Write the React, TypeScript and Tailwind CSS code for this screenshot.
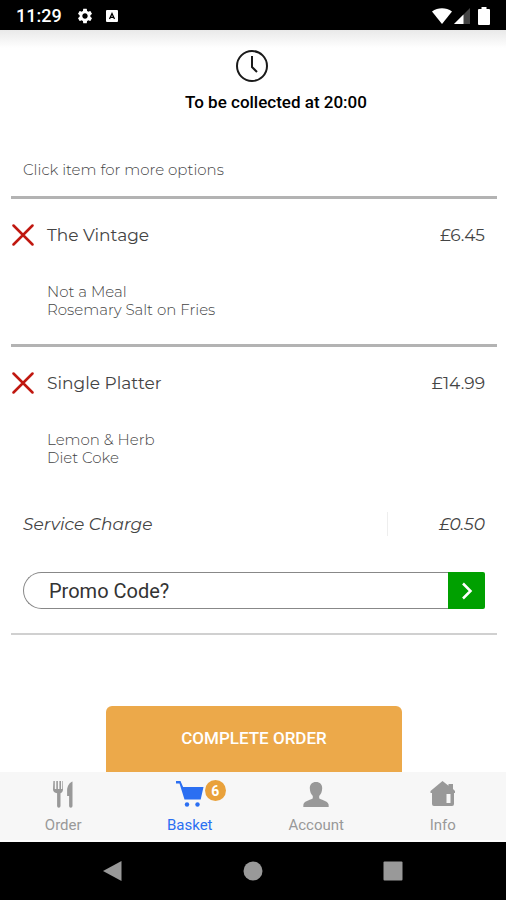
import { useState } from "react";
import { MdSettings } from "react-icons/md";

const items = [
  {
    name: "The Vintage",
    price: "£6.45",
    options: ["Not a Meal", "Rosemary Salt on Fries"],
  },
  {
    name: "Single Platter",
    price: "£14.99",
    options: ["Lemon & Herb", "Diet Coke"],
  },
];

function ClockIcon() {
  return (
    <svg
      viewBox="0 0 32 32"
      className="h-8 w-8"
      fill="none"
      stroke="#1a1a1a"
      strokeWidth="2"
    >
      <circle cx="16" cy="16" r="15" />
      <path d="M16 6v11l5 5" />
    </svg>
  );
}

function CutleryIcon() {
  return (
    <svg viewBox="0 0 28 28" className="h-7 w-7" fill="currentColor">
      <path d="M4.400 1h1.400v8h1.500V1h1.600v8h1.500V1h1.600v8h1.200V1h.6l.2 8.500c0 2-1.200 3.200-2.500 3.800V26a1.600 1.600 0 0 1-3.400 0V13.300C5.500 12.700 4 11.500 4 9.500z" />
      <path d="M23.500 1.500V26a1.700 1.700 0 0 1-3.400 0V16h-2v-6c.2-4 2.400-7.500 5.400-8.500z" />
    </svg>
  );
}

function CartIcon() {
  return (
    <svg viewBox="0 0 28 28" className="h-7 w-7" fill="currentColor">
      <path d="M0 1h4.500l2.600 6H27.500l-2.800 12.500H8.500L3.500 3.500H0z" />
      <circle cx="11" cy="24.500" r="2.200" />
      <circle cx="21.500" cy="24.500" r="2.200" />
    </svg>
  );
}

function PersonIcon() {
  return (
    <svg viewBox="0 0 28 28" className="h-7 w-7" fill="currentColor">
      <path d="M14 2c4 0 6.300 2.600 6.200 6.200-.1 3.600-1.400 6.200-3 7.700v2.300c.6 1.400 8.800 2.200 9.400 6.400l.1 2.400H1.300l.1-2.400c.6-4.200 8.800-5 9.400-6.400v-2.300c-1.600-1.500-2.900-4.100-3-7.700C7.700 4.600 10 2 14 2z" />
    </svg>
  );
}

function HouseIcon() {
  return (
    <svg viewBox="0 0 28 28" className="h-7 w-7" fill="currentColor">
      <path
        fillRule="evenodd"
        d="M13.500 1l6 4.800V4H24v5l2 2v2h-1v11a2 2 0 0 1-2 2H5a2 2 0 0 1-2-2V13H1.500v-2zM17.500 14v9h4v-9z"
      />
    </svg>
  );
}

const tabs = [
  { label: "Order", icon: CutleryIcon },
  { label: "Basket", icon: CartIcon, badge: 6 },
  { label: "Account", icon: PersonIcon },
  { label: "Info", icon: HouseIcon },
];

function StatusBar() {
  return (
    <div className="flex h-[30px] shrink-0 items-center bg-black px-4 pt-0.5 text-white">
      <span className="text-lg font-medium">11:29</span>
      <MdSettings className="ml-3.5 h-[18px] w-[18px]" />
      <svg viewBox="0 0 12 12" className="ml-3 h-3 w-3">
        <rect width="12" height="12" rx="1" fill="#fff" />
        <path
          d="M3.500 9L6 3.500 8.500 9M4.500 7.300h3"
          fill="none"
          stroke="#000"
          strokeWidth="1.300"
        />
      </svg>
      <div className="ml-auto flex items-center gap-0.5">
        <svg viewBox="0 0 20 16" className="h-4 w-5" fill="#fff">
          <path d="M0 3.500C6-.8 14-.8 20 3.500L10 16z" />
        </svg>
        <svg viewBox="0 0 16 16" className="h-4 w-4">
          <path d="M0 16L16 0v16z" fill="#444" />
          <path d="M0 16L9.500 6.500V16z" fill="#fff" />
        </svg>
        <svg viewBox="0 0 12 18" className="ml-1.5 h-[18px] w-3" fill="#fff">
          <path d="M3.500 0h5v2H11a1 1 0 0 1 1 1v14a1 1 0 0 1-1 1H1a1 1 0 0 1-1-1V3a1 1 0 0 1 1-1h2.500z" />
        </svg>
      </div>
    </div>
  );
}

export default function App() {
  const [basket, setBasket] = useState(items);
  const [active, setActive] = useState("Basket");
  const [promo, setPromo] = useState("");

  return (
    <div className="flex min-h-screen flex-col bg-white font-['Roboto',sans-serif]">
      <StatusBar />

      <main className="flex flex-1 flex-col bg-[linear-gradient(to_bottom,#e9e9e9,#ffffff_18px)] pt-5 pr-[9px] pl-[11px]">
        <header className="flex flex-col items-center">
          <div className="pr-1">
            <ClockIcon />
          </div>
          <h1 className="mt-2 pl-11 text-[17px] leading-6 font-medium text-black">
            To be collected at 20:00
          </h1>
        </header>

        <div className="font-['Montserrat','Inter',sans-serif] text-[#444]">
          <p className="mt-[46px] mb-4 px-3 text-[15px] leading-5 font-light">
            Click item for more options
          </p>

          {/* Basket items */}
          <ul>
            {basket.map((item) => (
              <li
                key={item.name}
                className="flex items-start border-t-3 border-[#b3b3b3] pt-6 pr-3 pb-[25px]"
              >
                <button
                  aria-label={`Remove ${item.name}`}
                  onClick={() =>
                    setBasket((prev) => prev.filter((i) => i !== item))
                  }
                  className="flex h-6 w-6 items-center justify-center"
                >
                  <svg
                    viewBox="0 0 22 22"
                    className="h-[22px] w-[22px]"
                    stroke="#c01810"
                    strokeWidth="2.500"
                    strokeLinecap="round"
                  >
                    <path d="M1.500 1.500l19 19M20.500 1.500l-19 19" />
                  </svg>
                </button>
                <div className="ml-3 flex-1">
                  <div className="flex justify-between text-[17px] leading-6 font-normal">
                    <h2>{item.name}</h2>
                    <span>{item.price}</span>
                  </div>
                  <div className="mt-9 text-[15px] leading-[18px] font-light">
                    {item.options.map((o) => (
                      <p key={o}>{o}</p>
                    ))}
                  </div>
                </div>
              </li>
            ))}
          </ul>

          <div className="mt-5 flex px-3 text-[17px] leading-6 font-normal italic">
            <span className="flex-1">Service Charge</span>
            <span className="w-[98px] border-l border-[#eee] text-right">
              £0.50
            </span>
          </div>
        </div>

        {/* Promo code */}
        <form
          onSubmit={(e) => e.preventDefault()}
          className="mx-3 mt-9 flex h-[37px]"
        >
          <input
            aria-label="Promo code"
            value={promo}
            onChange={(e) => setPromo(e.target.value)}
            placeholder="Promo Code?"
            className="min-w-0 flex-1 rounded-l-full border border-r-0 border-[#888] bg-white pl-[25px] text-xl text-[#333] outline-none placeholder:text-[#333]"
          />
          <button
            aria-label="Apply promo code"
            className="flex w-[37px] items-center justify-center rounded-r-xs bg-[#00a000]"
          >
            <svg
              viewBox="0 0 12 18"
              className="h-[18px] w-3"
              fill="none"
              stroke="#fff"
              strokeWidth="2.500"
            >
              <path d="M2 1.500L9.500 9 2 16.500" />
            </svg>
          </button>
        </form>

        <hr className="mt-6 border-t-2 border-[#d0d0d0]" />

        <button className="mx-auto mt-auto h-[66px] w-[61%] rounded-t-md bg-[#eca94a] text-[17px] font-medium text-white">
          COMPLETE ORDER
        </button>
      </main>

      <nav className="grid h-[70px] shrink-0 grid-cols-4 border-b-2 border-white bg-[#f7f7f7]">
        {tabs.map(({ label, icon: Icon, badge }) => (
          <button
            key={label}
            onClick={() => setActive(label)}
            className={`flex flex-col items-center pt-2 ${
              active === label ? "text-[#2b6ff2]" : "text-[#999]"
            }`}
          >
            <span className="relative">
              <Icon />
              {badge && (
                <span className="absolute top-0 left-[29px] flex h-[21px] w-[21px] items-center justify-center rounded-full bg-[#e9a13b] text-sm font-bold text-white">
                  {badge}
                </span>
              )}
            </span>
            <span className="mt-[7px] text-[15px] leading-5">{label}</span>
          </button>
        ))}
      </nav>

      {/* Android navigation */}
      <div className="flex h-[58px] shrink-0 items-center justify-center gap-[120px] bg-black">
        <button aria-label="Back">
          <svg viewBox="0 0 20 20" className="h-5 w-5" fill="#999">
            <path d="M18.500 0v20L0 10z" />
          </svg>
        </button>
        <button aria-label="Home">
          <svg viewBox="0 0 20 20" className="h-5 w-5" fill="#999">
            <circle cx="10" cy="10" r="9.500" />
          </svg>
        </button>
        <button aria-label="Recent apps">
          <svg viewBox="0 0 20 20" className="h-5 w-5" fill="#999">
            <rect x=".5" y=".5" width="19" height="19" rx="1" />
          </svg>
        </button>
      </div>
    </div>
  );
}
